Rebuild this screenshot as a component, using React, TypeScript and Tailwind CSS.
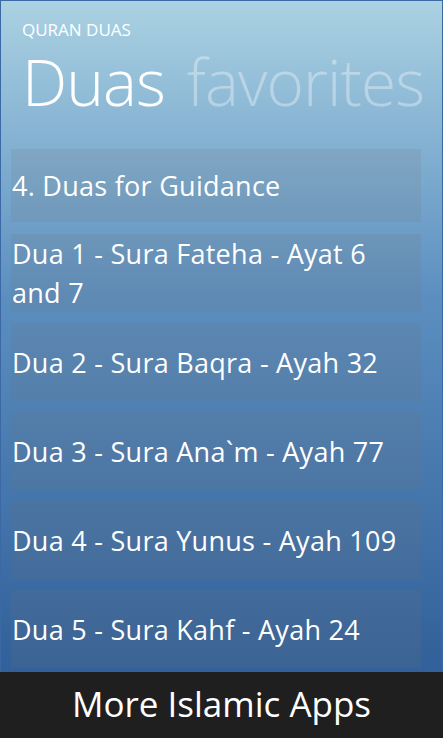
const items = [
  "Dua 1 - Sura Fateha - Ayat 6 and 7",
  "Dua 2 - Sura Baqra - Ayah 32",
  "Dua 3 - Sura Ana`m - Ayah 77",
  "Dua 4 - Sura Yunus - Ayah 109",
  "Dua 5 - Sura Kahf - Ayah 24",
];

export default function App() {
  return (
    <div
      className="flex h-[738px] w-[443px] flex-col overflow-hidden bg-gradient-to-b from-[#abd2e2] via-[#5c8fc0] via-40% to-[#2a5893] text-white"
      style={{ fontFamily: '"Open Sans", "Noto Sans", sans-serif' }}
    >
      <div className="flex flex-1 flex-col border-x border-t border-[#3b69a6]">
        {/* header */}
        <div className="pl-[21px] pt-[18px]">
          <p className="text-[17px] leading-[22px]">QURAN DUAS</p>
          <div className="mt-[13px] flex items-baseline gap-[22px] text-[64px] font-light leading-[56px] tracking-[-0.015em]">
            <span>Duas</span>
            <span className="text-white/35">favorites</span>
          </div>
        </div>

        {/* list */}
        <div className="mt-[39px] flex flex-col pl-[10px] pr-[21px]">
          <div className="flex h-[73px] items-center bg-[#6f6f6f]/15 pl-[1px] text-[27px] leading-[39px] tracking-[0.01em]">
            4. Duas for Guidance
          </div>
          <div className="mt-[12px] flex flex-col gap-[11px]">
            {items.map((t) => (
              <div
                key={t}
                className="flex h-[78px] items-center bg-[#6f6f6f]/15 pl-[1px] pr-2 text-[27px] leading-[39px] tracking-[0.01em]"
              >
                {t}
              </div>
            ))}
          </div>
        </div>
      </div>

      {/* app bar */}
      <div className="flex h-[66px] items-center justify-center bg-[#1f1f1f] pb-[2px] text-[35px] leading-[40px]">
        More Islamic Apps
      </div>
    </div>
  );
}
